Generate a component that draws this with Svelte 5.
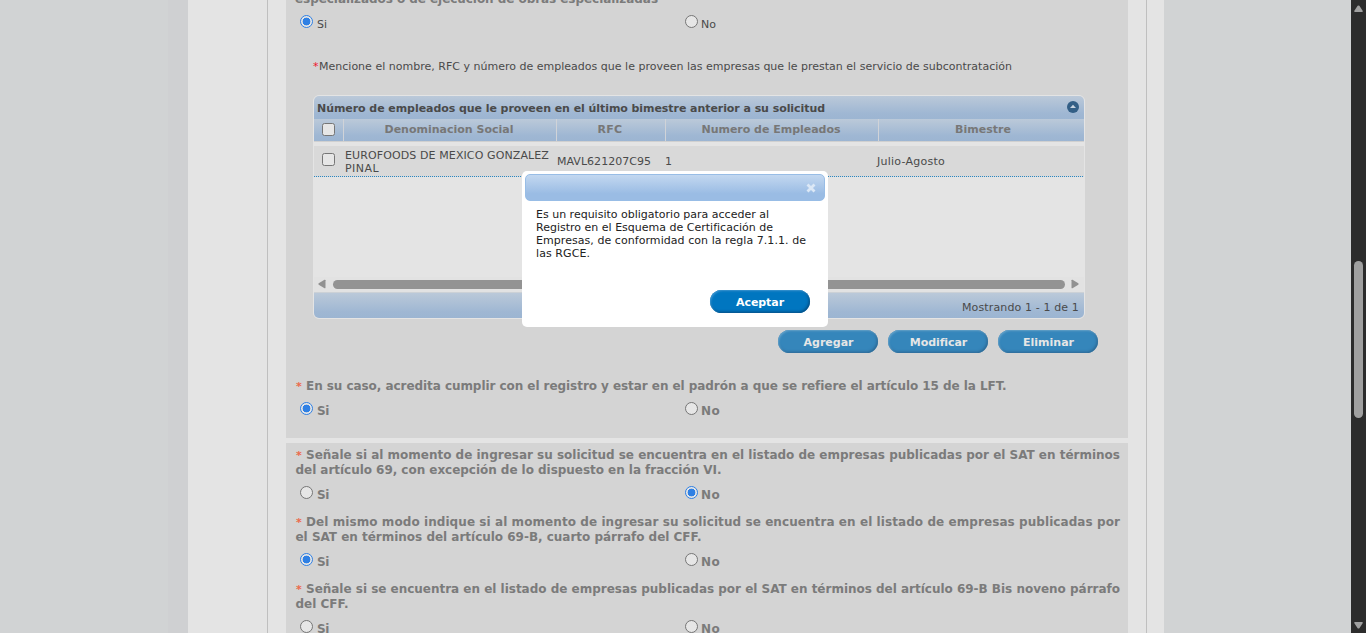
<script>
  const columns = [
    { label: 'Denominacion Social', width: 129 },
    { label: 'RFC', width: 25 },
    { label: 'Numero de Empleados', width: 139 },
    { label: 'Bimestre', width: 56 }
  ];

  const questions = [
    {
      lines: [
        ['Señale si al momento de ingresar su solicitud se encuentra en el listado de empresas publicadas por el SAT en términos', 814],
        ['del artículo 69, con excepción de lo dispuesto en la fracción VI.', 426]
      ],
      value: 'No'
    },
    {
      lines: [
        ['Del mismo modo indique si al momento de ingresar su solicitud se encuentra en el listado de empresas publicadas por', 814],
        ['el SAT en términos del artículo 69-B, cuarto párrafo del CFF.', 406]
      ],
      value: 'Si'
    },
    {
      lines: [
        ['Señale si se encuentra en el listado de empresas publicadas por el SAT en términos del artículo 69-B Bis noveno párrafo', 814],
        ['del CFF.', 53]
      ],
      value: ''
    }
  ];

  // Spreads the letters of a single line so that it takes the given width.
  function fit(node, width) {
    node.style.letterSpacing = '0px';
    const natural = node.getBoundingClientRect().width;
    node.style.letterSpacing = (width - natural) / node.textContent.length + 'px';
  }
</script>

{#snippet options(value, small)}
  <div class="options" class:small>
    {#each ['Si', 'No'] as option}
      <label class="option">
        <span class="radio" class:checked={value === option}></span>
        <span class="option-text"><span class="fit" use:fit={option === 'Si' ? (small ? 10 : 12) : (small ? 15 : 19)}>{option}</span></span>
      </label>
    {/each}
  </div>
{/snippet}

<div class="page">
  <div class="side"></div>
  <main class="content">
    <div class="frame">
      <section class="section first">
        <p class="line cut"><span class="fit" use:fit={363}>especializados o de ejecución de obras especializadas</span></p>
        {@render options('Si', true)}

        <p class="note"><span class="red">*</span><span class="fit" use:fit={693}>Mencione el nombre, RFC y número de empleados que le proveen las empresas que le prestan el servicio de subcontratación</span></p>

        <div class="grid">
          <div class="grid-title">
            <span class="fit" use:fit={508}>Número de empleados que le proveen en el último bimestre anterior a su solicitud</span>
            <svg width="12" height="12" viewBox="0 0 12 12"><circle cx="6" cy="6" r="6" fill="#335f86" /><path d="M3 7 L6 3.8 L9 7 Z" fill="#c8d4e0" /></svg>
          </div>
          <div class="grid-row head">
            <div class="check-cell"><span class="checkbox"></span></div>
            {#each columns as column}
              <div class="head-cell"><span class="fit" use:fit={column.width}>{column.label}</span></div>
            {/each}
          </div>
          <div class="grid-row body-row">
            <div class="check-cell"><span class="checkbox"></span></div>
            <div class="cell name">
              <span class="fit" use:fit={204}>EUROFOODS DE MEXICO GONZALEZ</span><br />
              <span class="fit" use:fit={34}>PINAL</span>
            </div>
            <div class="cell rfc"><span class="fit" use:fit={94}>MAVL621207C95</span></div>
            <div class="cell">1</div>
            <div class="cell last"><span class="fit" use:fit={68}>Julio-Agosto</span></div>
          </div>
          <div class="grid-space"></div>
          <div class="hscroll">
            <svg width="8" height="10" viewBox="0 0 8 10"><path d="M7.5 1.2 V8.8 Q7.3 9.6 6.5 9.2 L.7 5.7 Q0 5 .7 4.3 L6.5 .8 Q7.3 .4 7.5 1.2Z" fill="#919191" /></svg>
            <div class="hthumb"></div>
            <svg width="8" height="10" viewBox="0 0 8 10"><path d="M.5 1.2 V8.8 Q.7 9.6 1.5 9.2 L7.3 5.7 Q8 5 7.3 4.3 L1.5 .8 Q.7 .4 .5 1.2Z" fill="#919191" /></svg>
          </div>
          <div class="grid-foot"><span class="fit" use:fit={117}>Mostrando 1 - 1 de 1</span></div>
        </div>

        <div class="actions">
          <button class="btn dim"><span class="fit" use:fit={50}>Agregar</span></button>
          <button class="btn dim"><span class="fit" use:fit={57}>Modificar</span></button>
          <button class="btn dim"><span class="fit" use:fit={51}>Eliminar</span></button>
        </div>

        <p class="line"><span class="star">*</span><span class="fit" use:fit={700}>En su caso, acredita cumplir con el registro y estar en el padrón a que se refiere el artículo 15 de la LFT.</span></p>
        {@render options('Si', false)}
      </section>

      <section class="section second">
        {#each questions as question}
          <div class="question">
            <p class="line"><span class="star">*</span><span class="fit" use:fit={question.lines[0][1]}>{question.lines[0][0]}</span></p>
            <p class="line rest"><span class="fit" use:fit={question.lines[1][1]}>{question.lines[1][0]}</span></p>
            {@render options(question.value, false)}
          </div>
        {/each}
      </section>
    </div>
  </main>
  <div class="side right"></div>
  <div class="vscroll">
    <svg width="9" height="8" viewBox="0 0 9 8"><path d="M3.6 .8 Q4.5 0 5.4 .8 L8.8 6 Q9 7 8 7 H1 Q0 7 .2 6Z" fill="#a0a0a0" /></svg>
    <div class="vthumb"></div>
    <svg width="9" height="8" viewBox="0 0 9 8"><path d="M3.6 7.2 Q4.5 8 5.4 7.2 L8.8 2 Q9 1 8 1 H1 Q0 1 .2 2Z" fill="#a0a0a0" /></svg>
  </div>

  <div class="dialog">
    <div class="dialog-head">
      <svg width="10" height="10" viewBox="0 0 10 10"><path d="M1.5 1.5 L8.5 8.5 M8.5 1.5 L1.5 8.5" stroke="#dce8f6" stroke-width="2.8" /></svg>
    </div>
    <div class="dialog-text">
      <span class="fit" use:fit={233}>Es un requisito obligatorio para acceder al</span><br />
      <span class="fit" use:fit={237}>Registro en el Esquema de Certificación de</span><br />
      <span class="fit" use:fit={270}>Empresas, de conformidad con la regla 7.1.1. de</span><br />
      <span class="fit" use:fit={54}>las RGCE.</span>
    </div>
    <button class="btn"><span class="fit" use:fit={48}>Aceptar</span></button>
  </div>
</div>

<style>
  :global(body) {
    margin: 0;
    overflow: hidden;
  }
  .page, .page * {
    box-sizing: border-box;
  }
  .page {
    position: relative;
    display: flex;
    width: 1366px;
    height: 633px;
    overflow: hidden;
    background: #d1d3d4;
    font: 11px/13px Verdana, "DejaVu Sans", sans-serif;
    color: #4a4a4a;
  }
  p {
    margin: 0;
  }
  .fit {
    display: inline-block;
    white-space: nowrap;
  }
  .side {
    width: 188px;
    background: linear-gradient(90deg, #d1d3d4 168px, #cfd0d2 168px);
  }
  .side.right {
    width: 187px;
    background: #d1d3d4;
  }
  .content {
    width: 976px;
    padding: 0 17px 0 79px;
    background: #e4e4e4;
  }
  .frame {
    height: 633px;
    padding: 0 18px;
    border-left: 1px solid #bfbfbf;
    border-right: 1px solid #bfbfbf;
  }
  .section {
    width: 842px;
    padding-left: 9px;
    background: #d4d4d4;
    overflow: hidden;
  }
  .first {
    height: 438px;
  }
  .second {
    height: 190px;
    margin-top: 5px;
    padding-top: 5px;
  }
  .line {
    display: flex;
    height: 15px;
    font-size: 12px;
    font-weight: bold;
    line-height: 15px;
    color: #7b7b7b;
  }
  .cut {
    margin-top: -8px;
  }
  .rest {
    padding-left: 0.5px;
  }
  .star {
    width: 11px;
    padding-left: 1px;
    font-size: 11px;
    line-height: 16px;
    color: #ec6a4c;
  }
  .question {
    height: 67px;
  }
  .options {
    display: flex;
    height: 18px;
    margin-top: 8px;
    padding-left: 5px;
    font-size: 12px;
    font-weight: bold;
    color: #7b7b7b;
  }
  .options.small {
    margin-top: 8px;
    font-size: 11px;
    font-weight: normal;
    color: #4a4a4a;
  }
  .option {
    display: flex;
    width: 385px;
    gap: 4px;
  }
  .option + .option {
    gap: 3px;
  }
  .option-text {
    padding-top: 3px;
    line-height: 13px;
  }
  .radio {
    display: flex;
    width: 13px;
    height: 13px;
    border: 1px solid #767676;
    border-radius: 50%;
    background: #e6e6e6;
  }
  .radio.checked {
    border-color: #2f80e4;
    background: radial-gradient(circle, #2f80e4 3.6px, #e6e6e6 4.2px);
  }
  .note {
    display: flex;
    margin: 27px 0 0 18px;
  }
  .red {
    width: 6px;
    color: #f0142c;
  }
  .grid {
    width: 772px;
    height: 224px;
    margin: 22px 0 0 18px;
    border: 1px solid #e4e4e4;
    border-radius: 6px;
    background: #e4e4e4;
    overflow: hidden;
  }
  .grid-title {
    display: flex;
    justify-content: space-between;
    height: 23px;
    padding: 5px 5px 0 3px;
    background: linear-gradient(#bbc9d9, #9fb7d3 75%, #9cb5d2);
    font-weight: bold;
    line-height: 15px;
  }
  .grid-row {
    display: grid;
    grid-template-columns: 29px 213px 109px 213px 206px;
  }
  .head {
    height: 23px;
    border-bottom: 1px solid #d0d0d0;
    background: linear-gradient(#bbc9d9, #9fb7d3 75%, #9cb5d2);
    font-weight: bold;
    color: #777;
  }
  .head-cell {
    border-left: 1px solid #d0d3d8;
    padding: 4px 2px 0 0;
    text-align: center;
  }
  .head-cell:last-child {
    padding: 4px 0 0 3px;
  }
  .check-cell {
    padding: 4px 0 0 8px;
  }
  .checkbox {
    display: block;
    width: 13px;
    height: 13px;
    border: 1px solid #767676;
    border-radius: 2.5px;
    background: #e6e6e6;
  }
  .body-row {
    height: 31px;
    margin-top: 4px;
    background: repeating-linear-gradient(90deg, #2a87c2 0 1px, #d9d9d9 1px 2px) bottom / 100% 1px no-repeat #d9d9d9;
  }
  .body-row .check-cell {
    padding-top: 7px;
  }
  .cell {
    padding-top: 9px;
    white-space: nowrap;
  }
  .cell.name {
    padding: 3px 0 0 2px;
  }
  .cell.rfc {
    padding-left: 1px;
  }
  .cell.last {
    margin-left: -1px;
  }
  .grid-space {
    height: 100px;
  }
  .hscroll {
    display: flex;
    align-items: center;
    justify-content: space-between;
    height: 15px;
    padding: 0 5px 1px 4px;
    background: #e2e2e2;
  }
  .hthumb {
    width: 732px;
    height: 9px;
    border-radius: 5px;
    background: #939393;
  }
  .grid-foot {
    height: 26px;
    padding: 8px 5px 0 0;
    border-top: 1px solid #ccd1d6;
    background: linear-gradient(#bbc9d9, #9fb7d3 75%, #9cb5d2);
    text-align: right;
  }
  .actions {
    display: flex;
    gap: 10px;
    margin: 11px 0 26px 483px;
  }
  .btn {
    display: block;
    width: 100px;
    height: 23px;
    padding: 1px 0 0 0;
    border: 0;
    border-radius: 12px;
    background: #0076c0;
    box-shadow: inset 1px 1px 2px #3d97d2, inset -1px -1px 3px #05487a;
    font: bold 11px/13px Verdana, "DejaVu Sans", sans-serif;
    color: #fff;
    text-align: center;
  }
  .btn.dim {
    padding-left: 1px;
    background: #3586bb;
    box-shadow: inset 1px 1px 2px #66a3cb, inset -1px -1px 3px #2c648e;
    color: #e6e6e6;
  }
  .vscroll {
    display: flex;
    flex-direction: column;
    align-items: center;
    width: 15px;
    padding: 5px 0 4px;
    background: #2c2c2c;
  }
  .vthumb {
    width: 9px;
    height: 157px;
    margin: 248px 0 auto;
    border-radius: 5px;
    background: #a0a0a0;
  }
  .dialog {
    position: absolute;
    left: 522px;
    top: 171px;
    width: 306px;
    height: 156px;
    padding: 3px;
    border-radius: 5px;
    background: #fff;
    color: #222;
  }
  .dialog-head {
    display: flex;
    justify-content: flex-end;
    height: 27px;
    padding: 8px 8px 0 0;
    border: 1px solid #98bde6;
    border-radius: 5px;
    background: linear-gradient(#c3d8f0, #9abce4 75%);
  }
  .dialog-text {
    height: 89px;
    padding: 7px 0 0 11px;
  }
  .dialog .btn {
    margin-left: 185px;
  }
</style>
